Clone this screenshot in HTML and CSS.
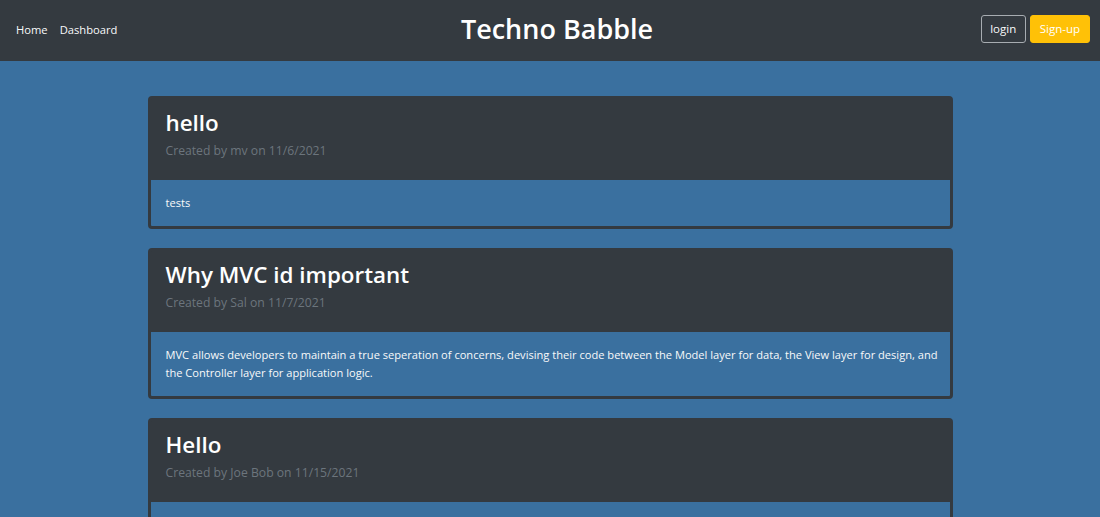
FILE: index.html
```html
<!DOCTYPE html>
<html lang="en">
<head>
<meta charset="utf-8">
<title>Techno Babble</title>
<link rel="stylesheet" href="styles.css">
</head>
<body>
<header class="navbar">
  <nav class="nav-left">
    <a class="nav-link" href="#">Home</a>
    <a class="nav-link" href="#">Dashboard</a>
  </nav>
  <h1 class="brand">Techno Babble</h1>
  <div class="nav-right">
    <a class="btn btn-outline" href="#">login</a>
    <a class="btn btn-warning" href="#">Sign-up</a>
  </div>
</header>
<main class="posts">
  <article class="card">
    <div class="card-header">
      <h2 class="card-title">hello</h2>
      <p class="card-meta">Created by mv on 11/6/2021</p>
    </div>
    <div class="card-body">
      <p>tests</p>
    </div>
  </article>
  <article class="card">
    <div class="card-header">
      <h2 class="card-title">Why MVC id important</h2>
      <p class="card-meta">Created by Sal on 11/7/2021</p>
    </div>
    <div class="card-body">
      <p>MVC allows developers to maintain a true seperation of concerns, devising their code between the Model layer for data, the View layer for design, and the Controller layer for application logic.</p>
    </div>
  </article>
  <article class="card">
    <div class="card-header">
      <h2 class="card-title">Hello</h2>
      <p class="card-meta">Created by Joe Bob on 11/15/2021</p>
    </div>
    <div class="card-body">
      <p>This is a test post.</p>
    </div>
  </article>
</main>
</body>
</html>
```

FILE: styles.css
```css
* { box-sizing: border-box; }
html, body { margin: 0; padding: 0; }
body {
  background: #3a709f;
  font-family: "Open Sans", "Noto Sans", sans-serif;
  color: #f8f9fa;
  font-size: 11.2px;
  overflow: hidden;
}
.navbar {
  background: #343a40;
  height: 61px;
  display: grid;
  grid-template-columns: 1fr auto 1fr;
  align-items: center;
  padding: 0 10px 3px 16px;
}
.nav-left { display: flex; gap: 12px; }
.nav-link { color: #f8f9fa; text-decoration: none; font-size: 11.2px; }
.brand {
  margin: 0 0 0 8px;
  font-size: 27px;
  line-height: 36px;
  font-weight: 600;
  color: #fff;
}
.nav-right { display: flex; justify-content: flex-end; gap: 4px; }
.btn {
  display: inline-block;
  height: 28px;
  line-height: 26px;
  padding: 0 9px;
  border-radius: 3px;
  border: 1px solid transparent;
  text-decoration: none;
  font-size: 11.5px;
}
.btn-outline { border-color: #a7acb1; color: #f8f9fa; padding: 0 8.5px; }
.btn-warning { background: #ffc107; border-color: #ffc107; color: #fff; }
.posts {
  width: 805px;
  margin: 35px auto 0;
  display: flex;
  flex-direction: column;
  gap: 19px;
}
.card {
  border: 3px solid #343a40;
  border-radius: 4px;
  background: #343a40;
  overflow: hidden;
}
.card-header { padding: 8px 15px 20px; }
.card-title { margin: 0; font-size: 22.4px; font-weight: 600; line-height: 31px; color: #fff; }
.card-meta { margin: 4px 0 0; font-size: 12.2px; line-height: 18px; color: #6c757d; }
.card-body { background: #3a709f; padding: 14px 12px 14px 15px; }
.card-body p { margin: 0; line-height: 18px; font-size: 11.1px; }
```
